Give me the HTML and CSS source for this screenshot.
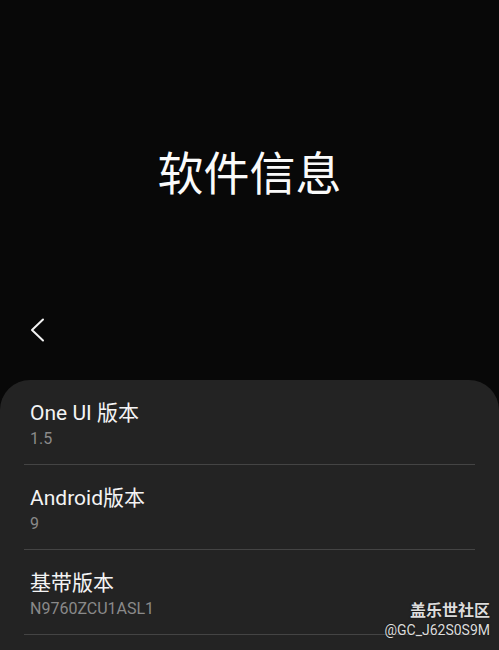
FILE: index.html
```html
<!DOCTYPE html>
<html lang="zh-CN">
<head>
    <meta charset="UTF-8">
    <meta name="viewport" content="width=device-width, initial-scale=1.0">
    <title>软件信息</title>
    <link rel="stylesheet" href="styles.css">
</head>
<body>

<div class="top">
    <div class="title-area">
        <h1>软件信息</h1>
    </div>
    <div class="toolbar">
        <a class="back" href="#">
            <svg width="24" height="24" viewBox="0 0 24 24">
                <polyline points="17,1.5 6,12 17,22.5" fill="none" stroke="#f2f2f2" stroke-width="2" stroke-linecap="round" stroke-linejoin="round"/>
            </svg>
        </a>
    </div>
</div>

<div class="card">
    <div class="item">
        <div class="item-title">One UI 版本</div>
        <div class="item-value">1.5</div>
    </div>
    <div class="item">
        <div class="item-title">Android版本</div>
        <div class="item-value">9</div>
    </div>
    <div class="item">
        <div class="item-title">基带版本</div>
        <div class="item-value">N9760ZCU1ASL1</div>
    </div>
</div>

<div class="watermark">
    <div class="wm-name">盖乐世社区</div>
    <div class="wm-user">@GC_J62S0S9M</div>
</div>

</body>
</html>
```

FILE: styles.css
```css
body {
    font-family: Roboto, "Noto Sans CJK SC", sans-serif;
    margin: 0;
    padding: 0;
    background-color: #080808;
    height: 650px;
    overflow: hidden;
    position: relative;
}
.top {
    display: flex;
    flex-direction: column;
}
.title-area {
    height: 302px;
    box-sizing: border-box;
    padding-top: 46px;
    display: flex;
    align-items: center;
    justify-content: center;
}
.title-area h1 {
    margin: 0;
    color: #fafafa;
    font-size: 46px;
    font-weight: normal;
    line-height: 56px;
}
.toolbar {
    height: 56px;
    display: flex;
    align-items: center;
    padding-left: 26px;
    margin-bottom: 22px;
}
.back {
    display: block;
    width: 24px;
    height: 24px;
}
.card {
    background-color: #232323;
    border-radius: 30px 30px 0 0;
    min-height: 270px;
}
.item {
    margin: 0 24px;
    padding: 20px 0 15px 6px;
    border-bottom: 1px solid #444;
}
.item-title {
    color: #f4f4f4;
    font-size: 21px;
    line-height: 26px;
}
.item-value {
    color: #8a8a8a;
    font-size: 16px;
    line-height: 20px;
    margin-top: 3px;
}
.watermark {
    position: absolute;
    right: 9px;
    bottom: 11px;
    text-align: right;
    color: #dcdcdc;
    text-shadow: 0 0 2px rgba(0, 0, 0, 0.6);
}
.wm-name {
    font-size: 16px;
    font-weight: bold;
    line-height: 20px;
}
.wm-user {
    font-size: 14px;
    line-height: 18px;
}
```
